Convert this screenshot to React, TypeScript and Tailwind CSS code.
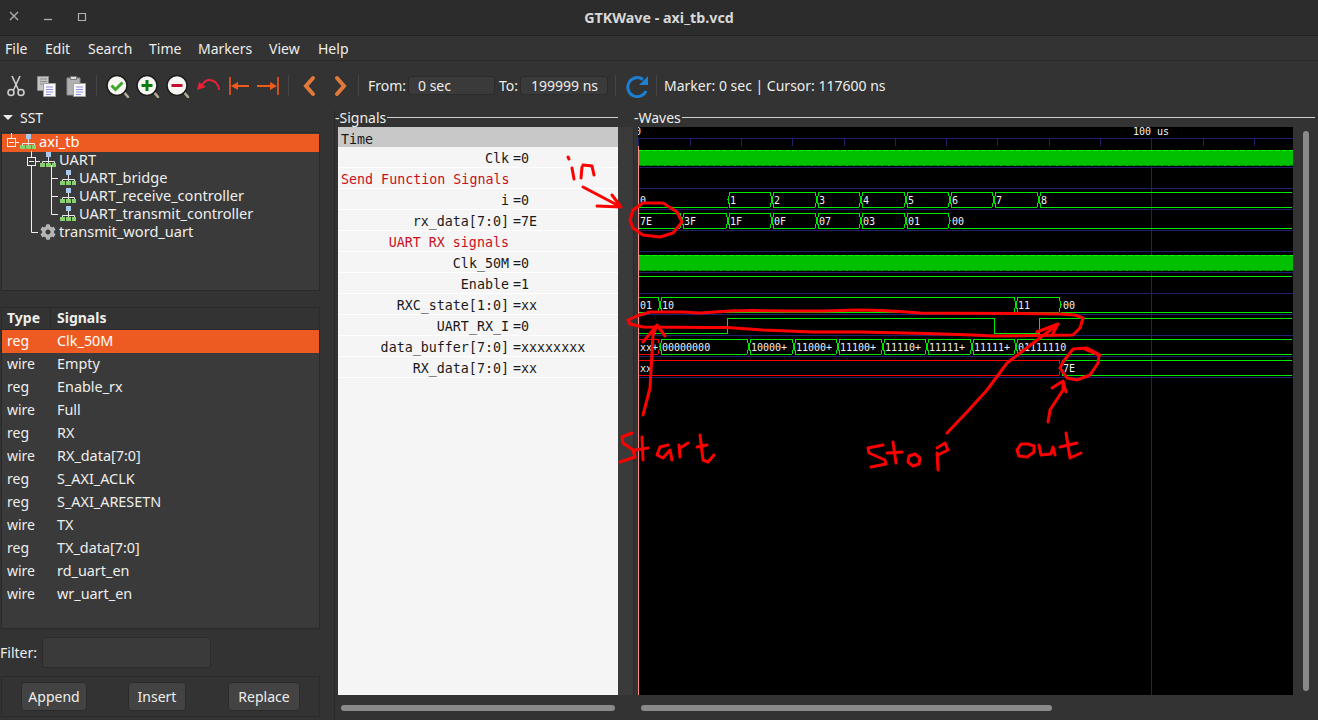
import { FaCog } from "react-icons/fa"

const menus = [
  { label: "File", w: "w-[40px]" },
  { label: "Edit", w: "w-[43px]" },
  { label: "Search", w: "w-[61px]" },
  { label: "Time", w: "w-[49px]" },
  { label: "Markers", w: "w-[71px]" },
  { label: "View", w: "w-[49px]" },
  { label: "Help", w: "w-[49px]" },
]

const types = [
  ["reg", "Clk_50M"],
  ["wire", "Empty"],
  ["reg", "Enable_rx"],
  ["wire", "Full"],
  ["reg", "RX"],
  ["wire", "RX_data[7:0]"],
  ["reg", "S_AXI_ACLK"],
  ["reg", "S_AXI_ARESETN"],
  ["wire", "TX"],
  ["reg", "TX_data[7:0]"],
  ["wire", "rd_uart_en"],
  ["wire", "wr_uart_en"],
]

const signalRows = [
  { name: "Clk", value: "=0" },
  { name: "Send Function Signals", red: true, left: true },
  { name: "i", value: "=0" },
  { name: "rx_data[7:0]", value: "=7E" },
  { name: "UART RX signals", red: true },
  { name: "Clk_50M", value: "=0" },
  { name: "Enable", value: "=1" },
  { name: "RXC_state[1:0]", value: "=xx" },
  { name: "UART_RX_I", value: "=0" },
  { name: "data_buffer[7:0]", value: "=xxxxxxxx" },
  { name: "RX_data[7:0]", value: "=xx" },
]

type Seg = { a: number; b: number; label: string; flat?: boolean; red?: boolean }

const buses: { top: number; segs: Seg[] }[] = [
  {
    top: 192,
    segs: [
      { a: 638, b: 728, label: "0", flat: true },
      { a: 728, b: 772, label: "1" },
      { a: 772, b: 817, label: "2" },
      { a: 817, b: 861, label: "3" },
      { a: 861, b: 906, label: "4" },
      { a: 906, b: 950, label: "5" },
      { a: 950, b: 994, label: "6" },
      { a: 994, b: 1039, label: "7" },
      { a: 1039, b: 1292, label: "8" },
    ],
  },
  {
    top: 213,
    segs: [
      { a: 638, b: 682, label: "7E" },
      { a: 682, b: 728, label: "3F" },
      { a: 728, b: 772, label: "1F" },
      { a: 772, b: 817, label: "0F" },
      { a: 817, b: 861, label: "07" },
      { a: 861, b: 906, label: "03" },
      { a: 906, b: 950, label: "01" },
      { a: 950, b: 1292, label: "00", flat: true },
    ],
  },
  {
    top: 297,
    segs: [
      { a: 638, b: 660, label: "01" },
      { a: 660, b: 1016, label: "10" },
      { a: 1016, b: 1061, label: "11" },
      { a: 1061, b: 1292, label: "00", flat: true },
    ],
  },
  {
    top: 339,
    segs: [
      { a: 638, b: 660, label: "xx+", red: true },
      { a: 660, b: 749, label: "00000000" },
      { a: 749, b: 794, label: "10000+" },
      { a: 794, b: 838, label: "11000+" },
      { a: 838, b: 883, label: "11100+" },
      { a: 883, b: 927, label: "11110+" },
      { a: 927, b: 972, label: "11111+" },
      { a: 972, b: 1016, label: "11111+" },
      { a: 1016, b: 1292, label: "01111110" },
    ],
  },
  {
    top: 360,
    segs: [
      { a: 638, b: 1061, label: "xx", red: true },
      { a: 1061, b: 1292, label: "7E" },
    ],
  },
]

const scribbles = [
  // in
  "M568 157l1 2",
  "M572 168l2 11",
  "M581 178l1-11M583 165l9 1 2 9",
  "M583 187l38 20M597 206l24 1-9-12",
  // 7E circle
  "M643 203L663 203L677 212L682 222L673 233L660 237L643 235L633 228L630 220L633 210L643 203",
  // long loop
  "M1083 318L1075 315L1060 314L1016 313.5L920 313L900 311.5L880 310.5L860 310L823 311L787 311L753 310.5L730 311L700 313L683 312L650 312L637 316L628 320L630 324L643 327L707 327.5L727 327.5L763 330L813 332L860 332L927 333.5L973 335L993 336L1073 335L1080 328L1083 318",
  // start arrow
  "M643 415L650 388L653 335L657 325M643 342L657 325L665 336",
  // stop arrow
  "M947 433L967 412L987 390L1007 363L1020 353L1057 325M1037 332L1058 324L1052 335",
  // out circle
  "M1100 355L1087 348L1073 349L1063 362L1060 368L1067 378L1077 380L1090 375L1098 363L1099 355L1085 349",
  // out arrow
  "M1048 422L1050 410L1063 390L1063 382M1052 388L1063 381L1066 392",
  // Start
  "M632 433l-10 4 1 6 10 7 2 7-15 5",
  "M642 437l1 23M635 450l13-2",
  "M668 445l-8 2-3 8 6 3 7-8 2 10",
  "M679 445l1 12M680 448l8-5",
  "M700 435l3 25 5 2 6-7M697 447l10-2",
  // Stop
  "M883 445l-15 3 1 5 16 7 1 4-15 3",
  "M893 442l3 21M887 453l15-1",
  "M915 454l-6 2-1 6 5 4 6-2 1-6-5-4",
  "M937 453l1 17M937 448l8-5 3 7-10 5",
  // out
  "M1028 444l-7 0-4 6 2 6 8 1 7-5 0-6-6-2",
  "M1039 445L1041 455L1051 454L1053 447L1055 455",
  "M1066 433L1070 458L1081 453M1060 447L1077 443",
]

function Sep() {
  return <div className="h-[21px] w-px bg-[#454545]" />
}

function HierIcon() {
  return (
    <svg width="16" height="16" viewBox="0 0 16 16" className="shrink-0">
      <rect x="6" y="0" width="5" height="5" fill="#a9c9ec" />
      <path d="M8.5 5v4M2.5 11V9.5h12V11M8.5 9v2" stroke="#e8e8e8" fill="none" />
      <rect x="0" y="11" width="5" height="4" fill="#8bd06e" />
      <rect x="6" y="11" width="5" height="4" fill="#8bd06e" />
      <rect x="12" y="11" width="4" height="4" fill="#8bd06e" />
    </svg>
  )
}

function ZoomIcon({ children }: { children: React.ReactNode }) {
  return (
    <svg width="24" height="24" viewBox="0 0 24 24">
      <path d="M17 17l5 6" stroke="#b5ad95" strokeWidth="2.5" strokeLinecap="round" />
      <circle cx="11" cy="11.5" r="10" fill="#f6f6f2" stroke="#1c1c1c" strokeWidth="1.5" />
      {children}
    </svg>
  )
}

function PageLines() {
  return <path d="M12 13h7M12 15.5h7M12 18h7M12 20.5h5" stroke="#8f90dc" strokeWidth="1" />
}

function ToolIcon({ children }: { children: React.ReactNode }) {
  return <div className="flex w-[30px] items-center justify-center">{children}</div>
}

function Bus({ top, seg }: { top: number; seg: Seg }) {
  const bot = top + 15
  const mid = top + 7.5
  const color = seg.red ? "#ff0000" : "#00e800"
  const { a, b } = seg
  const x0 = a === 638 ? a : a + 2
  const open = b === 1292
  return (
    <g>
      {seg.flat ? (
        <path d={`M${a} ${bot + 0.5}H${b}`} stroke={color} shapeRendering="crispEdges" />
      ) : (
        <path
          d={
            open
              ? `M${b} ${top + 0.5}H${x0}L${a} ${mid}L${x0} ${bot + 0.5}H${b}`
              : `M${a} ${mid}L${x0} ${top + 0.5}H${b - 2}L${b} ${mid}L${b - 2} ${bot + 0.5}H${x0}Z`
          }
          stroke={color}
          fill="none"
          shapeRendering="crispEdges"
        />
      )}
      <text x={a + 2} y={bot - 3} fontSize="10" fill="#f2f2f2" className="font-['DejaVu_Sans_Mono',monospace]">
        {seg.label}
      </text>
    </g>
  )
}

function Waves() {
  const ticks = Array.from({ length: 13 }, (_, i) => 638.3 + i * 51.3)
  const rowLines = [167, 188, 209, 230, 251, 272, 293, 314, 335, 356, 377]
  return (
    <svg width="655" height="568" viewBox="638 127 655 568" className="block bg-black">
      <path d="M638 138.5H1293" stroke="#20206e" />
      {ticks.map((x) => (
        <path key={x} d={`M${Math.round(x) + 0.5} 138V146`} stroke="#20206e" />
      ))}
      <path d="M1151.5 146V695" stroke="#20206e" />
      {rowLines.map((y) => (
        <path key={y} d={`M638 ${y + 0.5}H1293`} stroke="#20206e" />
      ))}
      <text x="1133" y="135" fontSize="10" fill="#f2f2f2" className="font-['DejaVu_Sans_Mono',monospace]">
        100 us
      </text>
      <text x="635" y="135" fontSize="10" fill="#f2f2f2" className="font-['DejaVu_Sans_Mono',monospace]">
        0
      </text>

      {/* clocks */}
      <rect x="638" y="150" width="655" height="16" fill="#00c000" />
      <path d="M638 150.5H1293" stroke="#00ff00" strokeDasharray="5 2" />
      <path d="M638 165.5H1293" stroke="#008000" strokeDasharray="5 2" />
      <rect x="638" y="255" width="655" height="16" fill="#00c000" />
      <path d="M638 255.5H1293" stroke="#00ff00" strokeDasharray="5 2" />
      <path d="M638 270.5H1293" stroke="#008000" strokeDasharray="5 2" />

      {/* Enable */}
      <path d="M638 276.5H1292" stroke="#00e800" />

      {/* UART_RX_I */}
      <path
        d="M638 333.5H727.5V318.5H994.5V333.5H1039.5V318.5H1292"
        stroke="#00e800"
        fill="none"
        shapeRendering="crispEdges"
      />

      {buses.map((bus) =>
        bus.segs.map((seg) => <Bus key={`${bus.top}-${seg.a}`} top={bus.top} seg={seg} />),
      )}

      <path d="M638.5 146V695" stroke="#ff8a8a" />
    </svg>
  )
}

export default function App() {
  return (
    <div className="relative flex h-[720px] w-[1318px] flex-col overflow-hidden bg-[#333333] font-['Noto_Sans',sans-serif] text-[14px] text-[#eeeeec]">
      {/* Title bar */}
      <header className="relative flex h-[36px] shrink-0 items-center justify-center border-b border-[#222222] bg-[#2c2c2c]">
        <svg width="100" height="36" viewBox="0 0 100 36" className="absolute left-0 top-0">
          <path d="M10 12l8 8M18 12l-8 8" stroke="#b0b0b0" strokeWidth="1.3" />
          <path d="M44 19.5h8" stroke="#b0b0b0" strokeWidth="1.3" />
          <path d="M78.5 13.5h7v7h-7z" stroke="#b0b0b0" strokeWidth="1.2" fill="none" />
        </svg>
        <span className="text-[14.3px] font-bold text-[#d8d8d8]">GTKWave - axi_tb.vcd</span>
      </header>

      {/* Menu */}
      <nav className="flex h-[25px] shrink-0 items-center border-b border-[#2a2a2a] pl-[5px]">
        {menus.map((m) => (
          <span key={m.label} className={m.w}>
            {m.label}
          </span>
        ))}
      </nav>

      {/* Toolbar */}
      <div className="flex h-[49px] shrink-0 items-center pl-px">
        <ToolIcon>
          <svg width="24" height="24" viewBox="0 0 24 24">
            <path d="M8 2l6.5 14M16 2L9.5 16" stroke="#d0d0d0" strokeWidth="1.6" fill="none" />
            <circle cx="7" cy="18.5" r="3" stroke="#d0d0d0" strokeWidth="1.6" fill="none" />
            <circle cx="17" cy="18.5" r="3" stroke="#d0d0d0" strokeWidth="1.6" fill="none" />
          </svg>
        </ToolIcon>
        <ToolIcon>
          <svg width="24" height="24" viewBox="0 0 24 24">
            <path d="M3.5 2.5h11v14h-11z" fill="#c4c4c4" stroke="#8a8a8a" />
            <path d="M6 5h7M6 7.5h7M6 10h7" stroke="#8c8c8c" />
            <path d="M9.5 9.5h12v13h-12z" fill="#f8f8f8" stroke="#a0a0a0" />
            <PageLines />
          </svg>
        </ToolIcon>
        <ToolIcon>
          <svg width="24" height="24" viewBox="0 0 24 24">
            <path d="M3 4h13v17H3z" fill="#b0b0b0" stroke="#8c8c8c" />
            <path d="M6.5 2.5h6v3h-6z" fill="#dedede" stroke="#777777" />
            <path d="M9.5 9.5h12v13h-12z" fill="#f8f8f8" stroke="#a0a0a0" />
            <PageLines />
          </svg>
        </ToolIcon>
        <div className="ml-[5px] mr-[6px]">
          <Sep />
        </div>
        <ToolIcon>
          <ZoomIcon>
            <path d="M5.5 11.5l4 4 7-7" stroke="#3fa52a" strokeWidth="3" fill="none" />
          </ZoomIcon>
        </ToolIcon>
        <ToolIcon>
          <ZoomIcon>
            <path d="M11 6v11M5.5 11.5h11" stroke="#0a7d12" strokeWidth="3" fill="none" />
          </ZoomIcon>
        </ToolIcon>
        <ToolIcon>
          <ZoomIcon>
            <path d="M5.5 11.5h11" stroke="#c4102e" strokeWidth="3" fill="none" />
          </ZoomIcon>
        </ToolIcon>
        <ToolIcon>
          <svg width="24" height="24" viewBox="0 0 24 24">
            <path d="M23 16c0-5-4-10-10-10-3 0-5 2-7 5" stroke="#e8203a" strokeWidth="2" fill="none" />
            <path d="M1 16l2-8 7 5z" fill="#e8203a" />
          </svg>
        </ToolIcon>
        <ToolIcon>
          <svg width="24" height="24" viewBox="0 0 24 24">
            <path d="M4 3v18" stroke="#f05a1a" strokeWidth="1.6" />
            <path d="M23 12H8" stroke="#f05a1a" strokeWidth="2" />
            <path d="M5 12l7-4v8z" fill="#f05a1a" />
          </svg>
        </ToolIcon>
        <ToolIcon>
          <svg width="24" height="24" viewBox="0 0 24 24">
            <path d="M22 3v18" stroke="#f05a1a" strokeWidth="1.6" />
            <path d="M1 12h16" stroke="#f05a1a" strokeWidth="2" />
            <path d="M21 12l-7-4v8z" fill="#f05a1a" />
          </svg>
        </ToolIcon>
        <div className="ml-[5px] mr-[5px]">
          <Sep />
        </div>
        <ToolIcon>
          <svg width="24" height="24" viewBox="0 0 24 24">
            <path d="M16 4l-7 8 7 8" stroke="#e0793a" strokeWidth="4" fill="none" strokeLinecap="round" />
          </svg>
        </ToolIcon>
        <div className="ml-[2px]">
          <ToolIcon>
            <svg width="24" height="24" viewBox="0 0 24 24">
              <path d="M8 4l7 8-7 8" stroke="#e0793a" strokeWidth="4" fill="none" strokeLinecap="round" />
            </svg>
          </ToolIcon>
        </div>
        <div className="ml-[2px] mr-[9px]">
          <Sep />
        </div>
        <span className="w-[40px]">From:</span>
        <div className="flex h-[19px] w-[87px] items-center rounded-[3px] border border-[#2b2b2b] bg-[#3a3a3a] pl-[9px]">
          0 sec
        </div>
        <span className="ml-[4px] w-[21px]">To:</span>
        <div className="flex h-[19px] w-[88px] items-center rounded-[3px] border border-[#2b2b2b] bg-[#3a3a3a] pl-[10px]">
          199999 ns
        </div>
        <div className="ml-[7px] mr-[9px]">
          <Sep />
        </div>
        <svg width="24" height="24" viewBox="0 0 24 24">
          <path d="M18 5.5A9.5 9.5 0 1 0 21 17" stroke="#1c7fd0" strokeWidth="3" fill="none" />
          <path d="M23 2v9h-9z" fill="#1c7fd0" />
        </svg>
        <div className="ml-[7px] mr-[7px]">
          <Sep />
        </div>
        <span>Marker: 0 sec | Cursor: 117600 ns</span>
      </div>

      {/* Panes */}
      <main className="flex min-h-0 flex-1">
        {/* SST column */}
        <section className="flex w-[335px] shrink-0 flex-col border-r border-[#2a2a2a] pl-px pr-[14px]">
          <div className="flex h-[22px] shrink-0 items-center gap-[7px] pb-[8px] pl-[2px]">
            <div className="h-0 w-0 border-x-[5px] border-t-[5px] border-x-transparent border-t-[#eeeeec]" />
            <span>SST</span>
          </div>

          <div className="relative h-[159px] shrink-0 border border-[#2a2a2a] bg-[#3a3a3a] pt-px text-[14.6px]">
            <div className="flex h-[18px] items-center gap-[3px] bg-[#ed5b22] pb-[2px] pl-[18px] text-white">
              <HierIcon />
              <span>axi_tb</span>
            </div>
            <div className="flex h-[18px] items-center gap-[3px] pb-[2px] pl-[38px]">
              <HierIcon />
              <span>UART</span>
            </div>
            {["UART_bridge", "UART_receive_controller", "UART_transmit_controller"].map((name) => (
              <div key={name} className="flex h-[18px] items-center gap-[3px] pb-[2px] pl-[58px]">
                <HierIcon />
                <span>{name}</span>
              </div>
            ))}
            <div className="flex h-[18px] items-center gap-[3px] pb-[2px] pl-[38px]">
              <FaCog className="h-[16px] w-[16px] shrink-0 text-[#b4b4b4]" />
              <span>transmit_word_uart</span>
            </div>
            {/* tree connectors */}
            <svg width="60" height="110" viewBox="1 133 60 110" className="absolute left-0 top-0">
              <path
                d="M30.5 151V232.5H37M50.5 165V214.5H57M50.5 178.5H57M50.5 196.5H57M35 161.5H39M15 142.5H18M10.5 133V138"
                stroke="#f0f0f0"
                fill="none"
              />
              <rect x="6.5" y="138.5" width="8" height="8" stroke="#f0f0f0" fill="#ed5b22" />
              <path d="M8 142.5h5" stroke="#f0f0f0" />
              <rect x="26.5" y="157.5" width="8" height="8" stroke="#f0f0f0" fill="#3a3a3a" />
              <path d="M28 161.5h5" stroke="#f0f0f0" />
            </svg>
          </div>

          <div className="mt-[16px] h-[322px] shrink-0 border border-[#2a2a2a] bg-[#3a3a3a]">
            <div className="flex h-[22px] items-center border-b border-[#2a2a2a] bg-[#333333] pb-[2px] font-bold">
              <span className="w-[49px] border-r border-[#2a2a2a] pl-[5px]">Type</span>
              <span className="pl-[6px]">Signals</span>
            </div>
            {types.map(([kind, name], i) => (
              <div
                key={name}
                className={`flex h-[23px] items-center pb-[2px] ${i === 0 ? "bg-[#ed5b22] text-white" : ""}`}
              >
                <span className="w-[55px] pl-[5px]">{kind}</span>
                <span className="text-[14.4px]">{name}</span>
              </div>
            ))}
          </div>

          <div className="mt-[8px] flex h-[31px] shrink-0 items-center">
            <span className="-ml-px w-[42px]">Filter:</span>
            <div className="h-[31px] w-[169px] rounded-[3px] border border-[#2b2b2b] bg-[#3a3a3a]" />
          </div>

          <div className="mt-[8px] flex h-[41px] shrink-0 items-center border border-[#2a2a2a] pl-[19px]">
            <button className="h-[29px] w-[66px] rounded-[4px] border border-[#2b2b2b] bg-[#434343]">Append</button>
            <button className="ml-[41px] h-[29px] w-[58px] rounded-[4px] border border-[#2b2b2b] bg-[#434343]">
              Insert
            </button>
            <button className="ml-[42px] h-[29px] w-[72px] rounded-[4px] border border-[#2b2b2b] bg-[#434343]">
              Replace
            </button>
          </div>
        </section>

        {/* Signals column */}
        <section className="flex w-[283px] shrink-0 flex-col">
          <div className="flex h-[17px] shrink-0 items-center pb-[3px]">
            <span>-Signals</span>
            <div className="ml-px h-px flex-1 bg-[#cfcfcf]" />
          </div>
          <div className="ml-[3px] h-[568px] shrink-0 bg-[#f5f5f5] font-['DejaVu_Sans_Mono',monospace] text-[13.33px] text-[#1a1a1a]">
            <div className="flex h-[20px] items-center bg-[#c8c8c8] pl-[3px] pt-[6px]">Time</div>
            {signalRows.map((row) => (
              <div key={row.name} className="flex h-[21px] items-center border-b border-white pt-[4px]">
                <span
                  className={`w-[171px] shrink-0 whitespace-pre ${row.left ? "pl-[3px] text-left" : "text-right"} ${row.red ? "text-[#c8101e]" : ""}`}
                >
                  {row.name}
                </span>
                {row.value && <span className="ml-[4px]">{row.value}</span>}
              </div>
            ))}
          </div>
          <div className="flex flex-1 items-center pl-[6px]">
            <div className="h-[6px] w-[274px] rounded-full bg-[#8a8a8a]" />
          </div>
        </section>

        {/* Gutter */}
        <div className="mb-[25px] mt-[17px] w-[16px] shrink-0 border-r border-[#2a2a2a] bg-[#3a3a3a]" />

        {/* Waves column */}
        <section className="flex min-w-0 flex-1 flex-col">
          <div className="flex h-[17px] shrink-0 items-center pb-[3px]">
            <span>-Waves</span>
            <div className="ml-px mr-[3px] h-px flex-1 bg-[#cfcfcf]" />
          </div>
          <div className="flex h-[568px] shrink-0 pl-[4px]">
            <Waves />
            <div className="flex flex-1 justify-center pt-[4px]">
              <div className="h-[560px] w-[6px] rounded-full bg-[#8a8a8a]" />
            </div>
          </div>
          <div className="flex flex-1 items-center pl-[7px]">
            <div className="h-[6px] w-[411px] rounded-full bg-[#8a8a8a]" />
          </div>
        </section>
      </main>

      {/* Red pen marks drawn over the window */}
      <svg
        width="1318"
        height="720"
        viewBox="0 0 1318 720"
        className="pointer-events-none absolute left-0 top-0"
      >
        {scribbles.map((d) => (
          <path key={d} d={d} stroke="#ff0000" strokeWidth="3" fill="none" strokeLinecap="round" strokeLinejoin="round" />
        ))}
      </svg>
    </div>
  )
}
